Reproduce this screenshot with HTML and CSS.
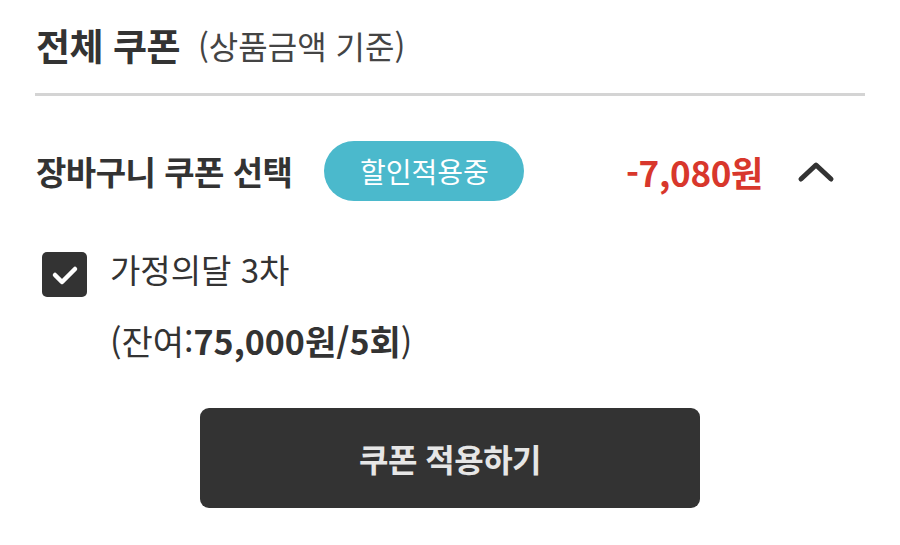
FILE: index.html
```html
<!DOCTYPE html>
<html lang="ko">
<head>
  <meta charset="UTF-8">
  <title>전체 쿠폰</title>
  <link rel="stylesheet" href="styles.css">
</head>
<body>
<div class="coupon-panel">
  <div class="panel-head">
    <span class="panel-title">전체 쿠폰</span>
    <span class="panel-sub">(상품금액 기준)</span>
  </div>

  <div class="cart-row">
    <span class="cart-title">장바구니 쿠폰 선택</span>
    <span class="badge">할인적용중</span>
    <span class="discount">-7,080원</span>
    <svg class="chevron" width="38" height="24" viewBox="0 0 38 24">
      <path d="M4 20 L19 6 L34 20" fill="none" stroke="#333" stroke-width="5" stroke-linecap="round" stroke-linejoin="round"/>
    </svg>
  </div>

  <div class="coupon-item">
    <span class="check">
      <svg width="28" height="22" viewBox="0 0 28 22">
        <path d="M4 11 L11 18 L24 5" fill="none" stroke="#fff" stroke-width="4.5" stroke-linecap="round" stroke-linejoin="round"/>
      </svg>
    </span>
    <span class="coupon-name">가정의달 3차</span>
  </div>
  <div class="coupon-rest">(잔여:<b>75,000원/5회</b>)</div>

  <div class="btn-wrap">
    <button class="apply-btn">쿠폰 적용하기</button>
  </div>
</div>
</body>
</html>
```

FILE: styles.css
```css
body {
  margin: 0;
  background: #fff;
  font-family: "Noto Sans CJK KR", "Noto Sans", sans-serif;
  color: #333;
}
.coupon-panel {
  width: 830px;
  padding: 0 35px;
}
.panel-head {
  display: flex;
  align-items: center;
  gap: 18px;
  border-bottom: 3px solid #d4d4d4;
  padding: 0 0 4px 1px;
  box-sizing: border-box;
  height: 96px;
}
.panel-title {
  font-size: 37px;
  font-weight: 700;
  letter-spacing: -0.5px;
}
.panel-sub {
  font-size: 32px;
  color: #444;
}
.cart-row {
  display: flex;
  align-items: center;
  height: 150px;
  padding-left: 1px;
}
.cart-title {
  font-size: 33px;
  font-weight: 700;
  letter-spacing: -0.5px;
}
.badge {
  margin-left: 32px;
  width: 200px;
  height: 60px;
  border-radius: 30px;
  background: #4bb9cc;
  color: #fff;
  font-size: 28px;
  display: flex;
  align-items: center;
  justify-content: center;
}
.discount {
  margin-left: auto;
  color: #d8372c;
  font-size: 35px;
  font-weight: 700;
  letter-spacing: -0.3px;
}
.chevron {
  margin-left: 34px;
  margin-right: 30px;
}
.coupon-item {
  display: flex;
  align-items: center;
  gap: 23px;
  padding-left: 7px;
  margin-top: 6px;
}
.check {
  width: 45px;
  height: 45px;
  border-radius: 5px;
  background: #333;
  display: flex;
  align-items: center;
  justify-content: center;
}
.coupon-name {
  font-size: 33px;
  line-height: 1;
  padding-bottom: 10px;
  color: #333;
}
.coupon-rest {
  margin: 20px 0 0 75px;
  font-size: 34px;
  line-height: 1.4;
  color: #333;
}
.coupon-rest b {
  font-weight: 700;
}
.btn-wrap {
  display: flex;
  justify-content: center;
  margin-top: 43px;
}
.apply-btn {
  width: 500px;
  height: 100px;
  border: none;
  border-radius: 9px;
  background: #333;
  color: #e6e6e6;
  font-family: inherit;
  font-size: 32px;
  font-weight: 700;
  letter-spacing: -0.5px;
}
```
